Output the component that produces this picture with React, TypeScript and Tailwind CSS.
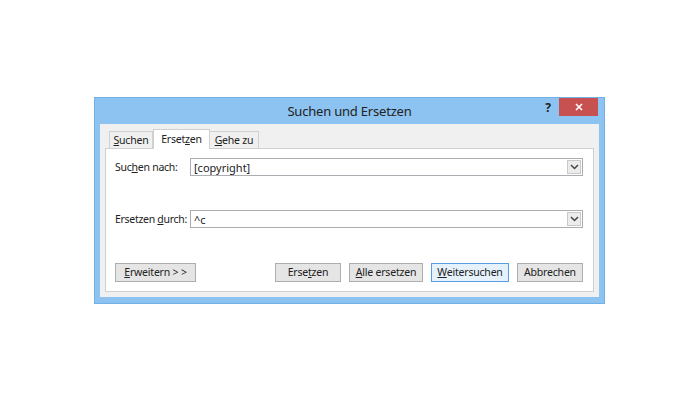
import React from "react";

const font = { fontFamily: '"Noto Sans", "Segoe UI", sans-serif' };

function Chevron() {
  return (
    <svg width="9" height="6" viewBox="0 0 9 6">
      <path d="M1 1 L4.5 4.5 L8 1" fill="none" stroke="#444" strokeWidth="1.5" />
    </svg>
  );
}

function Combo({ value }: { value: string }) {
  return (
    <div className="flex-1 h-[18px] border border-[#abadb3] bg-white flex items-center">
      <div className="flex-1 pl-[3px] text-[11px] text-[#222] leading-none whitespace-nowrap">{value}</div>
      <div className="w-[14px] h-[14px] mr-[1px] border border-[#c9c9c9] bg-[#ececec] flex items-center justify-center">
        <Chevron />
      </div>
    </div>
  );
}

function Btn({ children, w, primary }: { children: React.ReactNode; w: string; primary?: boolean }) {
  return (
    <div
      className={`${w} h-[19px] flex items-center justify-center text-[10.5px] tracking-[-0.2px] whitespace-nowrap text-[#222] leading-none border ${
        primary ? "border-[#5a9de0] bg-[#e5f1fb]" : "border-[#adadad] bg-[#e5e5e5]"
      }`}
    >
      {children}
    </div>
  );
}

export default function App() {
  return (
    <div className="w-[700px] h-[400px] bg-white overflow-hidden" style={font}>
      <div className="ml-[94px] mt-[97px] w-[511px] h-[207px] bg-[#8dc3f1] border border-[#75b0e4] flex flex-col">
        {/* title bar */}
        <div className="h-[26px] flex items-start relative">
          <div className="flex-1 text-center text-[13px] tracking-[-0.2px] text-[#222] pt-[3px] leading-[20px] whitespace-nowrap">Suchen und Ersetzen</div>
          <div className="absolute right-[53px] top-[1px] text-[12px] font-bold text-[#222]">?</div>
          <div className="absolute right-[6px] top-0 w-[39px] h-[18px] bg-[#c75050] flex items-center justify-center">
            <svg width="8" height="8" viewBox="0 0 8 8">
              <path d="M1 1 L7 7 M7 1 L1 7" stroke="white" strokeWidth="1.6" />
            </svg>
          </div>
        </div>
        {/* client */}
        <div className="mx-[5px] mb-[6px] flex-1 bg-[#f0f0f0] flex flex-col px-[5px] pt-[5px] pb-[5px]">
          {/* tabs */}
          <div className="h-[19px] flex items-end pl-[4px]">
            <div className="w-[44px] h-[17px] border border-b-0 border-[#d0d0d0] bg-[#f0f0f0] flex items-center justify-center text-[10.5px] tracking-[-0.2px] whitespace-nowrap text-[#222] leading-none">
              <span><u>S</u>uchen</span>
            </div>
            <div className="w-[57px] h-[20px] -mb-[1px] border border-b-0 border-[#d0d0d0] bg-white flex items-center justify-center text-[10.5px] tracking-[-0.2px] whitespace-nowrap text-[#222] leading-none relative z-10">
              <span>Erset<u>z</u>en</span>
            </div>
            <div className="w-[49px] h-[17px] border border-b-0 border-l-0 border-[#d0d0d0] bg-[#f0f0f0] flex items-center justify-center text-[10.5px] tracking-[-0.2px] whitespace-nowrap text-[#222] leading-none">
              <span><u>G</u>ehe zu</span>
            </div>
          </div>
          {/* panel */}
          <div className="flex-1 bg-white border border-[#d0d0d0] flex flex-col pl-[9px] pr-[10px] pt-[9px]">
            <div className="flex items-center">
              <div className="w-[75px] text-[10.5px] tracking-[-0.25px] whitespace-nowrap text-[#222] leading-none">Suc<u>h</u>en nach:</div>
              <Combo value="[copyright]" />
            </div>
            <div className="flex items-center mt-[34px]">
              <div className="w-[75px] text-[10.5px] tracking-[-0.3px] whitespace-nowrap text-[#222] leading-none">Ersetzen <u>d</u>urch:</div>
              <Combo value="^c" />
            </div>
            <div className="flex items-center mt-[35px]">
              <Btn w="w-[81px]"><span><u>E</u>rweitern &gt; &gt;</span></Btn>
              <div className="flex-1" />
              <div className="flex gap-[8px]">
                <Btn w="w-[66px]"><span>Erse<u>t</u>zen</span></Btn>
                <Btn w="w-[74px]"><span><u>A</u>lle ersetzen</span></Btn>
                <Btn w="w-[78px]" primary><span><u>W</u>eitersuchen</span></Btn>
                <Btn w="w-[66px]">Abbrechen</Btn>
              </div>
            </div>
          </div>
        </div>
      </div>
    </div>
  );
}
